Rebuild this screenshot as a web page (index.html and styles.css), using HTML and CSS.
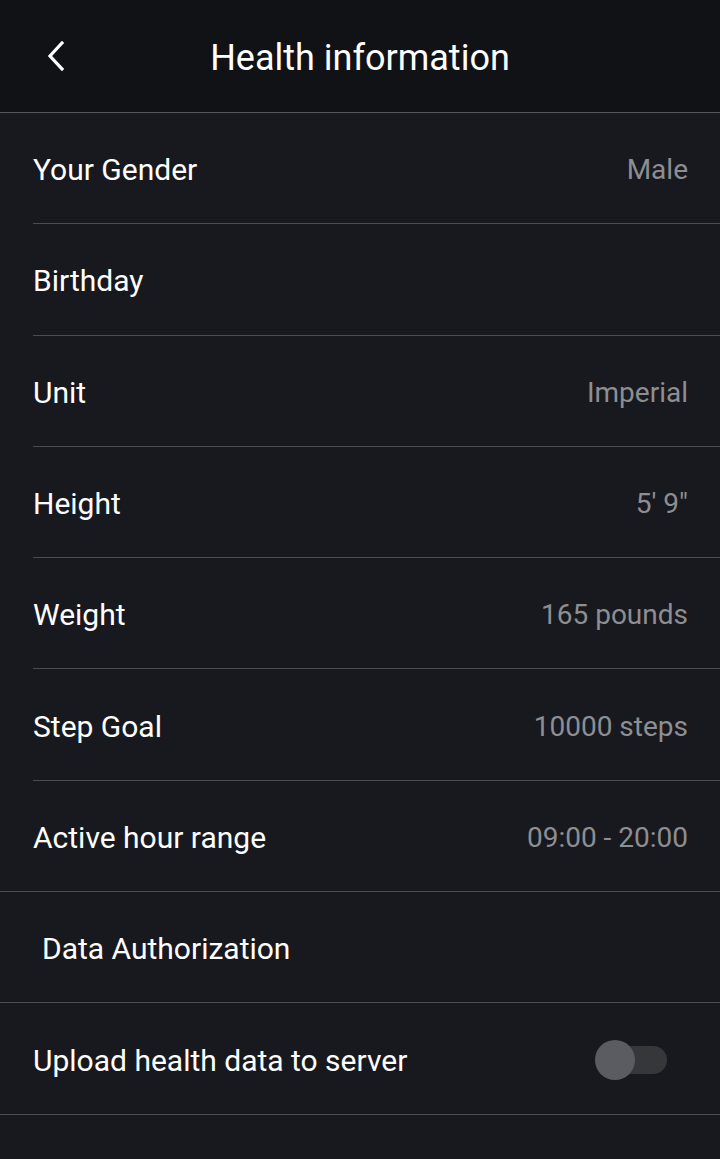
FILE: index.html
```html
<!DOCTYPE html>
<html>
<head>
<meta charset="utf-8">
<link rel="stylesheet" href="styles.css">
</head>
<body>
<div class="app">
  <header class="topbar">
    <span class="back">
      <svg width="20" height="30" viewBox="0 0 20 30"><polyline points="16,2 4,15 16,28" fill="none" stroke="#ffffff" stroke-width="3.2" stroke-linecap="square" stroke-linejoin="miter"/></svg>
    </span>
    <h1 class="title">Health information</h1>
  </header>
  <ul class="list">
    <li class="row"><span class="label">Your Gender</span><span class="value">Male</span></li>
    <li class="row"><span class="label">Birthday</span><span class="value"></span></li>
    <li class="row"><span class="label">Unit</span><span class="value">Imperial</span></li>
    <li class="row"><span class="label">Height</span><span class="value">5' 9"</span></li>
    <li class="row"><span class="label">Weight</span><span class="value">165 pounds</span></li>
    <li class="row"><span class="label">Step Goal</span><span class="value">10000 steps</span></li>
    <li class="row full"><span class="label">Active hour range</span><span class="value">09:00 - 20:00</span></li>
    <li class="row full section"><span class="label">Data Authorization</span></li>
    <li class="row full"><span class="label">Upload health data to server</span><span class="toggle"><span class="track"></span><span class="thumb"></span></span></li>
  </ul>
</div>
</body>
</html>
```
FILE: styles.css
```css
html, body {
  margin: 0;
  padding: 0;
  background: #18191e;
}
.app {
  width: 720px;
  height: 1159px;
  font-family: Roboto, "Noto Sans", sans-serif;
  color: #ffffff;
  background: #18191e;
}
.topbar {
  height: 113px;
  box-sizing: border-box;
  background: #111216;
  border-bottom: 1px solid #56575b;
  display: flex;
  align-items: center;
  position: relative;
}
.back {
  position: absolute;
  left: 46px;
  top: 41px;
  width: 20px;
  height: 30px;
  display: block;
}
.back svg { display: block; }
.title {
  margin: 0 auto;
  font-weight: 400;
  font-size: 36px;
  color: #ffffff;
  padding-top: 4px;
}
.list {
  list-style: none;
  margin: 0;
  padding: 0;
}
.row {
  height: 111.3px;
  box-sizing: border-box;
  margin-left: 33px;
  padding-right: 32px;
  padding-top: 3px;
  border-bottom: 1px solid #4b4c50;
  display: flex;
  align-items: center;
  justify-content: space-between;
}
.row.full {
  margin-left: 0;
  padding-left: 33px;
}
.row.section {
  padding-left: 42px;
}
.label {
  font-size: 30px;
  color: #ffffff;
}
.value {
  font-size: 28px;
  color: #8d8e92;
}
.toggle {
  position: relative;
  width: 72px;
  height: 40px;
  margin-right: 21px;
  display: block;
}
.track {
  position: absolute;
  left: 18px;
  top: 6px;
  width: 54px;
  height: 28px;
  border-radius: 14px;
  background: #36373b;
}
.thumb {
  position: absolute;
  left: 0;
  top: 0;
  width: 40px;
  height: 40px;
  border-radius: 50%;
  background: #5b5c61;
}
```
